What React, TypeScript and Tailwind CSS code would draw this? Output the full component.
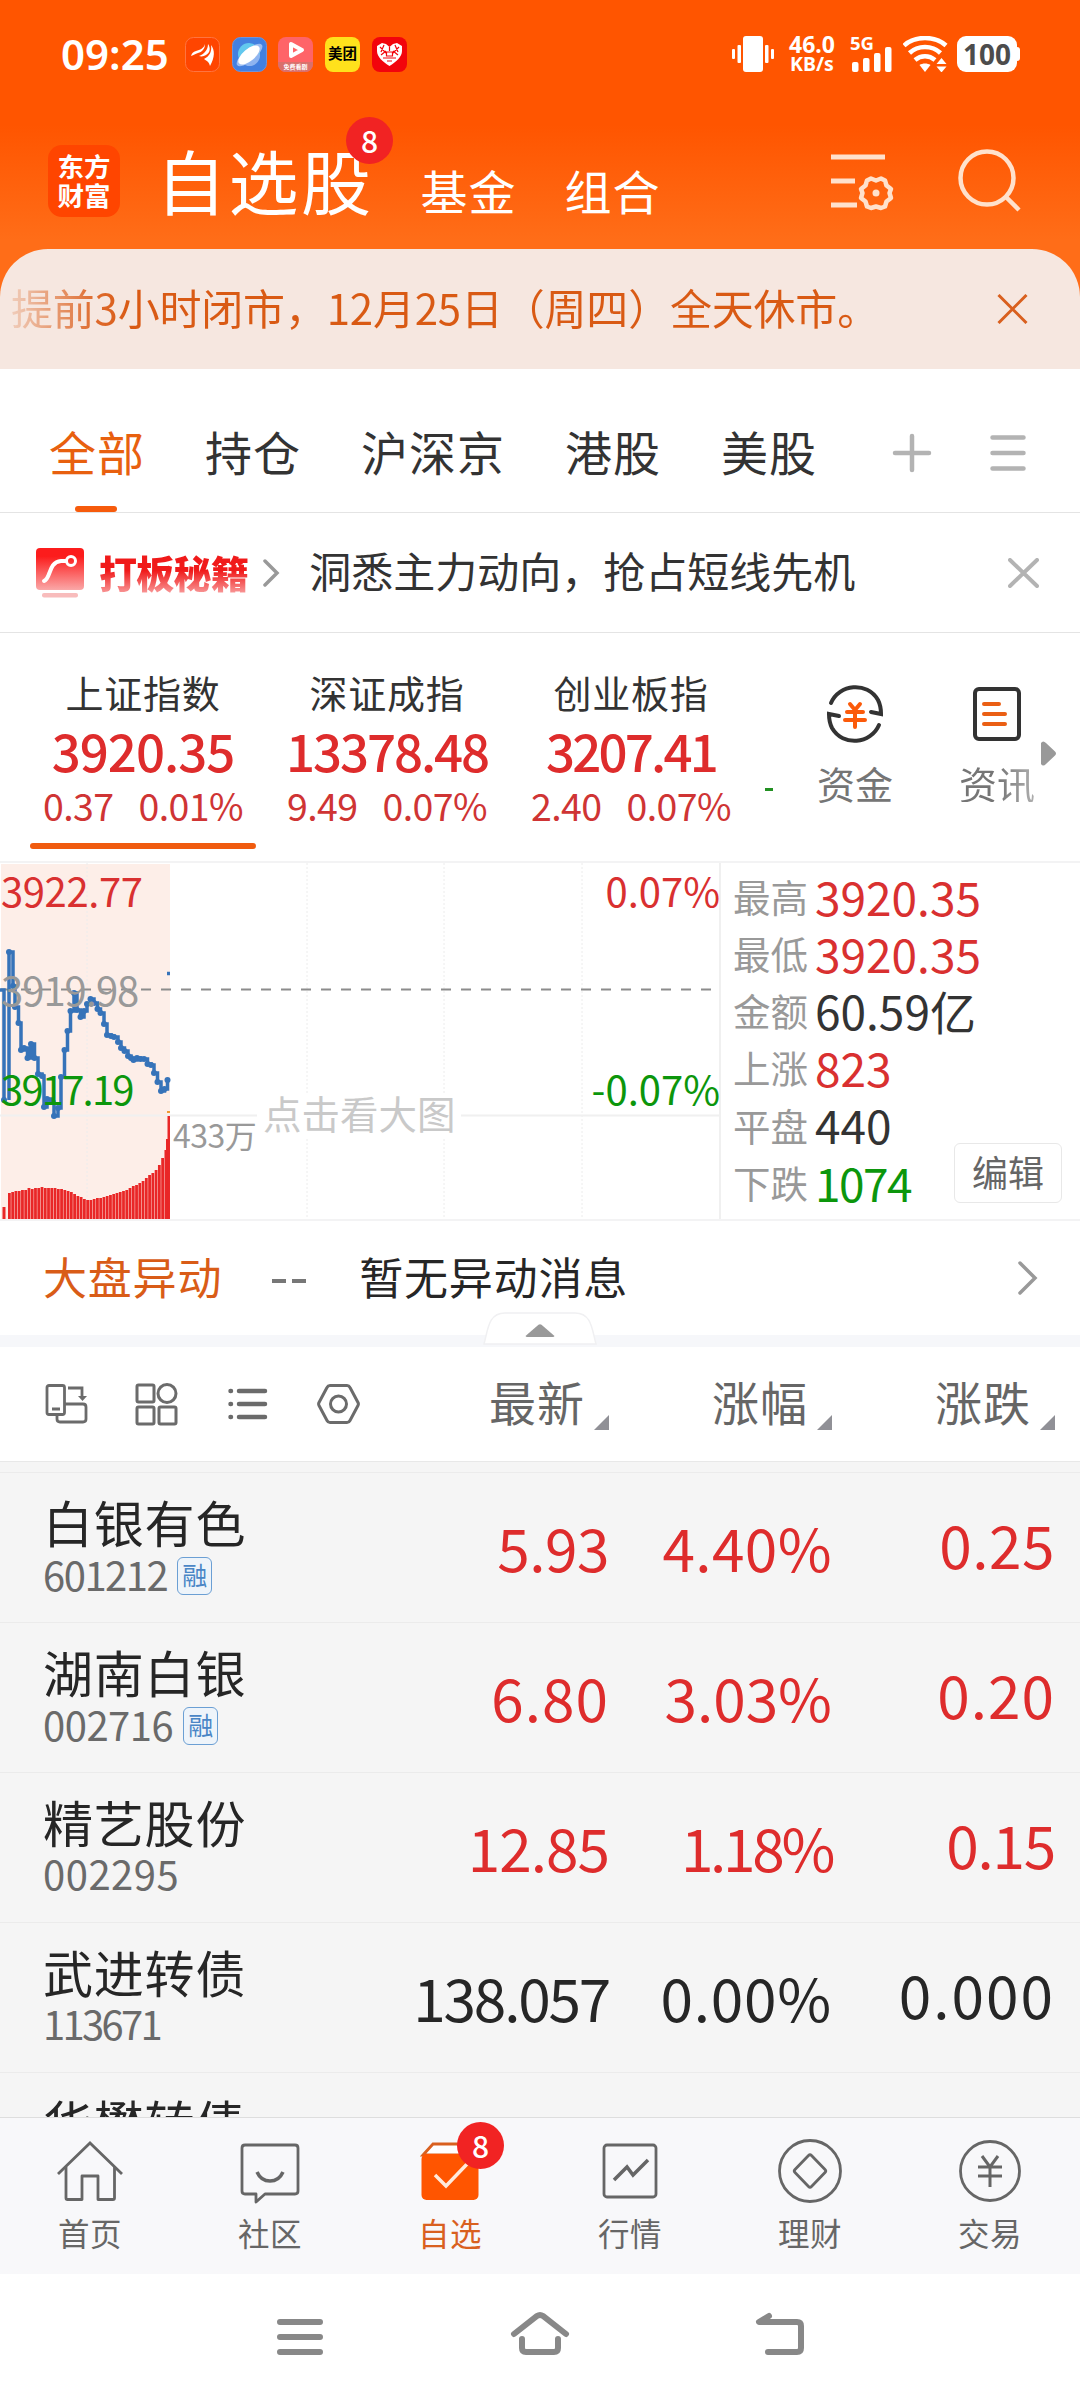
import type { ReactNode } from "react";

const FONT = "font-['Noto_Sans_CJK_SC',sans-serif]";

const TABS = ["全部", "持仓", "沪深京", "港股", "美股"];

const INDICES = [
  { name: "上证指数", value: "3920.35", diff: "0.37", pct: "0.01%", active: true, cls: "tracking-[-1px]" },
  { name: "深证成指", value: "13378.48", diff: "9.49", pct: "0.07%", active: false, cls: "tracking-[-2.1px]" },
  { name: "创业板指", value: "3207.41", diff: "2.40", pct: "0.07%", active: false, cls: "tracking-[-2.8px]" },
];

const STATS = [
  { label: "最高", value: "3920.35", color: "text-[#d93030]" },
  { label: "最低", value: "3920.35", color: "text-[#d93030]" },
  { label: "金额", value: "60.59亿", color: "text-[#333]" },
  { label: "上涨", value: "823", color: "text-[#d93030]" },
  { label: "平盘", value: "440", color: "text-[#333]" },
  { label: "下跌", value: "1074", color: "tracking-[-1.5px] text-[#0c960c]" },
];

const STOCKS = [
  { name: "白银有色", code: "601212", margin: true, price: "5.93", pct: "4.40%", diff: "0.25", up: true, codeCls: "tracking-[-1.5px]", priceCls: "tracking-[-0.5px]", pctCls: "tracking-[0.4px]", diffCls: "tracking-[0.5px]" },
  { name: "湖南白银", code: "002716", margin: true, price: "6.80", pct: "3.03%", diff: "0.20", up: true, codeCls: "tracking-[-0.5px]", priceCls: "tracking-[1px]", pctCls: "tracking-[0px]", diffCls: "tracking-[1px]" },
  { name: "精艺股份", code: "002295", margin: false, price: "12.85", pct: "1.18%", diff: "0.15", up: true, codeCls: "tracking-[0.5px]", priceCls: "tracking-[-1px]", pctCls: "tracking-[-3.3px]", diffCls: "tracking-[-1.2px]" },
  { name: "武进转债", code: "113671", margin: false, price: "138.057", pct: "0.00%", diff: "0.000", up: false, codeCls: "tracking-[-2.7px]", priceCls: "tracking-[-2.2px]", pctCls: "tracking-[0.8px]", diffCls: "tracking-[2px]" },
  { name: "华懋转债", code: "", margin: false, price: "", pct: "", diff: "", up: false, codeCls: "", priceCls: "", pctCls: "", diffCls: "" },
];

// intraday price, [x, y] in chart pixels
const PRICE: [number, number][] = [
  [9, 89], [13, 123], [15, 144], [18.5, 160], [21, 187], [24, 185], [27.5, 195], [31, 181],
  [34.5, 195], [38, 211], [42, 213], [44, 244], [47, 236], [51.5, 239], [54, 253], [58, 245],
  [61, 214], [64.5, 187], [67.5, 168], [70.5, 148], [74, 130], [77, 147], [80.5, 154], [84, 148],
  [87, 141], [90.5, 136], [94, 140], [97.5, 146], [100.5, 150], [104, 161], [107, 172],
  [111, 173], [114, 174], [118, 179], [121, 185], [124.5, 188], [128, 193], [131, 195],
  [133.5, 197], [137, 195], [140.5, 196], [144, 196], [147.5, 201], [151, 202], [154, 210],
  [157.5, 219], [161, 228], [164.5, 226], [167.5, 217],
];

const VOLUME = [
  26, 27, 28, 28, 29, 29, 31, 30, 31, 31, 32, 31, 31, 31, 31, 30, 30, 29, 28, 27, 25, 23, 22,
  20, 19, 19, 20, 21, 21, 22, 23, 24, 25, 26, 27, 28, 29, 31, 33, 34, 36, 38, 41, 44, 46, 49,
  54, 61, 69,
];

const stepPath = PRICE.map(([x, y], i) => (i === 0 ? `M${x} ${y}` : `H${x}V${y}`)).join("");

function StatusBar() {
  return (
    <div className="flex h-[108px] items-center">
      <span className="ml-[61px] w-[124px] font-['Noto_Sans',sans-serif] text-[42px] font-semibold leading-none text-white">
        09:25
      </span>
      <div className="flex gap-[11.7px]">
        <svg width="35" height="35" viewBox="0 0 35 35">
          <rect x=".5" y=".5" width="34" height="34" rx="8" fill="#ff4500" stroke="#ff7440" />
          <path d="M6 19c1-3 2-4 5-5 4-1 8-3 9-7 0 5-3 8-7 9-3 1-4 2-7 3zM14 19c5-2 9-6 9-12 3 4 2 9-2 11-2 1-4 2-7 1zM19 22c6-3 8-8 7-14 4 5 4 12-1 21-1-4-3-5-6-7z" fill="#fff" />
        </svg>
        <svg width="35" height="35" viewBox="0 0 35 35">
          <rect x=".5" y=".5" width="34" height="34" rx="8" fill="#4380e0" stroke="#6d93dc" />
          <circle cx="17" cy="17" r="11" fill="#62c8ee" />
          <path d="M10 26c8 7 18 1 18-8l-3-3z" fill="#8fb4f0" />
          <ellipse cx="17.500" cy="18" rx="16" ry="6" transform="rotate(-40 17.500 18)" fill="#9bbcf0" />
          <ellipse cx="17" cy="18" rx="13" ry="6" transform="rotate(-40 17 18)" fill="#fff" />
        </svg>
        <svg width="35" height="35" viewBox="0 0 35 35">
          <rect width="35" height="35" rx="8" fill="#ff6468" />
          <path d="M0 25h35v2a8 8 0 0 1-8 8H8a8 8 0 0 1-8-8z" fill="#d9706c" />
          <path d="M13 7v12l11-6z" fill="none" stroke="#fff" strokeWidth="4" strokeLinejoin="round" />
          <text x="17.5" y="32" textAnchor="middle" fontSize="6" fontWeight="700" fill="#fff">免费看剧</text>
        </svg>
        <div className="flex size-[35px] items-center justify-center rounded-lg bg-[#ffe11c] pb-px text-[14.5px] font-bold leading-none text-black">
          美团
        </div>
        <svg width="35" height="35" viewBox="0 0 35 35">
          <rect width="35" height="35" rx="8" fill="#f2040c" />
          <path d="M17.500 29C11 25 5 20 5 14V9l5-3 4 1 3.500 3L21 7l4-1 5 3v5c0 6-6 11-12.500 15z" fill="#fff" />
          <path d="M8 10l6 6m-5 2l5-4m13-4l-6 6m5 2l-5-4M12 8l-3 7m14-7l3 7M11 21h13m-9 3h5M17.500 10v4m-3 1h6v4h-6z" fill="none" stroke="#f2040c" strokeWidth="1.200" />
        </svg>
      </div>
      <svg className="ml-auto" width="42" height="36" viewBox="0 0 42 36" fill="#fff">
        <rect x="11" width="20" height="36" rx="3" />
        <rect y="13" width="3" height="10" rx="1" />
        <rect x="5.500" y="9" width="3.500" height="18" rx="1" />
        <rect x="33" y="9" width="3.500" height="18" rx="1" />
        <rect x="39" y="13" width="3" height="10" rx="1" />
      </svg>
      <div className="ml-[13px] flex w-[50px] flex-col items-center font-['Noto_Sans',sans-serif] font-bold leading-[20px] text-white">
        <span className="text-[23px]">46.0</span>
        <span className="text-[19.5px]">KB/s</span>
      </div>
      <div className="ml-[13px] flex w-[44px] flex-col">
        <span className="h-[13px] font-['Noto_Sans',sans-serif] text-[18.500px] font-bold leading-[13px] text-white">5G</span>
        <svg className="-mt-0.5 ml-0.5" width="41" height="25" viewBox="0 0 41 25" fill="#fff">
          <rect y="15" width="6.500" height="10" rx="2" />
          <rect x="11" y="11" width="6.500" height="14" rx="2" />
          <rect x="22" y="6" width="6.500" height="19" rx="2" />
          <rect x="33" width="6.500" height="25" rx="2" />
        </svg>
      </div>
      <svg className="ml-[9px]" width="45" height="36" viewBox="0 0 45 36" fill="none" stroke="#fff" strokeWidth="4.500">
        <path d="M1 9.500C12-.5 32-.5 43 9.500M6.500 17C15 9 29 9 37.500 17M12 24c6-5 14-5 20 0" />
        <path d="M16.500 29c3-2 8-2 11 0L22 36z" fill="#fff" stroke="none" />
        <path d="M33.500 28l5-6 5 6zM33.500 30.500l5 6 5-6z" fill="#fff" stroke="none" />
      </svg>
      <div className="ml-[9px] flex h-9 w-[60px] items-center justify-center rounded-[9px] bg-white font-['Noto_Sans',sans-serif] text-[28px] font-bold leading-none text-[#4c4c4c]">
        100
      </div>
      <div className="mr-[60px] h-[14px] w-[3px] rounded-r-sm bg-white" />
    </div>
  );
}

function Header() {
  return (
    <header className="flex h-[369px] flex-col bg-[linear-gradient(180deg,#ff5500_0px,#ff5500_125px,#ff6d18_240px,#ff6d18_369px)]">
      <StatusBar />
      <div className="flex h-[141px] items-start text-white">
        <div className="ml-12 mt-[37px] flex size-[72px] flex-col items-center justify-center rounded-[14px] bg-[#ff4500] pb-0.5 text-[26.5px] font-bold leading-[29px]">
          <span>东方</span>
          <span>财富</span>
        </div>
        <div className="relative ml-[36px] mt-[37px] text-[70px] leading-none tracking-[2.5px]">
          自选股
          <span className="absolute -top-7 left-[190px] flex size-[47px] items-center justify-center rounded-full bg-[#f12323] pb-0.5 text-[30px] font-medium tracking-normal">
            8
          </span>
        </div>
        <span className="ml-[47px] mt-[58px] text-[47px] leading-none tracking-[1px]">基金</span>
        <span className="ml-12 mt-[58px] text-[47px] leading-none tracking-[1px]">组合</span>
        <svg className="ml-auto mt-[45px]" width="64" height="58" viewBox="0 0 64 58" fill="none" stroke="#ffe1cc" strokeWidth="5">
          <path d="M0 4h54M0 28h24M0 52h26" />
          <path
            d="M40 25.500l5 2 5-2 4 2 1.500 5 4.500 3.500-1.500 4 1.500 5-4.500 3.500-1.500 5-4 1.500-5-1.500-5 1.500-4-1.500-1.500-5L30 45l1.500-5-1.500-4 4.500-3.500 1.500-5z"
            strokeWidth="4.500"
            strokeLinejoin="round"
          />
          <circle cx="45" cy="40" r="3.500" fill="#ffe1cc" stroke="none" />
        </svg>
        <svg className="ml-[62px] mr-[57px] mt-10" width="66" height="66" viewBox="0 0 66 66" fill="none" stroke="#ffe1cc" strokeWidth="4.500">
          <circle cx="30" cy="30" r="26.500" />
          <path d="M48 48l14 14" />
        </svg>
      </div>
      <div className="flex h-[120px] items-center rounded-t-[48px] bg-[#f6e7e0] pl-[11px]">
        <span className="whitespace-nowrap bg-[linear-gradient(90deg,#f0cdbb_0px,#de6a2c_85px,#d95a14_120px)] bg-clip-text pb-1 text-[42px] leading-[50px] tracking-[-0.2px] text-transparent">
          提前3小时闭市，12月25日（周四）全天休市。
        </span>
        <svg className="ml-auto mr-[52px]" width="31" height="30" viewBox="0 0 31 30" fill="none" stroke="#d9601f" strokeWidth="3">
          <path d="M1.500 1l28 28M29.500 1l-28 28" />
        </svg>
      </div>
    </header>
  );
}

function TabBar() {
  return (
    <nav className="flex h-[144px] items-start border-b border-[#e4e4e4] bg-white pl-[49px]">
      <div className="flex gap-[60px] pt-[58px] text-[47px] leading-none tracking-[1px] text-[#333]">
        {TABS.map((tab, i) => (
          <div key={tab} className={i === 0 ? "flex h-[85px] flex-col justify-between text-[#e8600f]" : "h-[85px]"}>
            <span>{tab}</span>
            {i === 0 && <span className="ml-[26px] h-1.5 w-[42px] rounded-full bg-[#f65b0c]" />}
          </div>
        ))}
      </div>
      <svg className="ml-auto mt-16" width="40" height="40" viewBox="0 0 40 40" stroke="#b3b3b3" strokeWidth="4.500" strokeLinecap="round">
        <path d="M3 20h34M20 3v34" />
      </svg>
      <svg className="ml-[57px] mr-[53px] mt-16" width="38" height="40" viewBox="0 0 38 40" stroke="#b3b3b3" strokeWidth="4.500" strokeLinecap="round">
        <path d="M3.500 4.500h31M3.500 20h31M3.500 35.500h31" />
      </svg>
    </nav>
  );
}

function Promo() {
  return (
    <div className="flex h-[120px] items-center border-b border-[#e4e4e4] bg-white pl-9">
      <svg width="48" height="50" viewBox="0 0 48 50" fill="none">
        <defs>
          <linearGradient id="promo" x1="0" y1="0" x2="0" y2="1">
            <stop offset=".2" stopColor="#fc1c1c" />
            <stop offset="1" stopColor="#faa8a8" />
          </linearGradient>
        </defs>
        <rect width="48" height="42" rx="4" fill="url(#promo)" />
        <path d="M8 33c7-2 4-19 17-20h5" stroke="#fff" strokeWidth="4" strokeLinecap="round" />
        <circle cx="35" cy="13" r="4.500" stroke="#fff" strokeWidth="3" />
        <rect x="6" y="45" width="36" height="4.500" rx="2" fill="#f8bcbc" />
      </svg>
      <span className="ml-[15px] bg-[linear-gradient(180deg,#f01a1a_45%,#f9a0a0_95%)] bg-clip-text pb-0.5 text-[38px] font-black leading-[46px] tracking-[-0.7px] text-transparent">
        打板秘籍
      </span>
      <svg className="ml-[14px]" width="18" height="28" viewBox="0 0 18 28" fill="none" stroke="#999" strokeWidth="3.500" strokeLinecap="round">
        <path d="M3 2l12 12L3 26" />
      </svg>
      <span className="ml-[29px] pb-1.5 text-[42px] leading-none text-[#333]">洞悉主力动向，抢占短线先机</span>
      <svg className="ml-auto mr-[41px]" width="31" height="30" viewBox="0 0 31 30" fill="none" stroke="#b3b3b3" strokeWidth="4" strokeLinecap="round">
        <path d="M2 2l27 26M29 2L2 28" />
      </svg>
    </div>
  );
}

function IndexStrip() {
  return (
    <section className="flex h-[228px] items-start bg-white pl-[21px] pt-10">
      {INDICES.map((item) => (
        <div key={item.name} className="flex w-[244px] flex-none flex-col items-center">
          <span className="text-[38px] leading-none tracking-[0.8px] text-[#333]">{item.name}</span>
          <span className={`mt-3.5 text-[51px] font-medium leading-none text-[#de2c2c] ${item.cls}`}>{item.value}</span>
          <span className="mt-2.5 flex gap-[25px] text-[37.500px] leading-none tracking-[-0.6px] text-[#cf3434]">
            <span>{item.diff}</span>
            <span>{item.pct}</span>
          </span>
          {item.active && <span className="mt-[19px] h-1.5 w-[226px] rounded-full bg-[#f05b0f]" />}
        </div>
      ))}
      <span className="ml-3 mt-[115px] h-[3px] w-2 bg-[#229022]" />
      <div className="ml-[44px] flex flex-col items-center pt-[11px]">
        <svg width="60" height="60" viewBox="0 0 60 60" fill="none" stroke="#333" strokeWidth="4" strokeLinecap="round">
          <path d="M6 19C14 0 42-3 53 16c2 4 3 9 3 14l-10-2" />
          <path d="M54 41C46 60 18 63 7 44c-2-4-3-9-3-14l10 2" />
          <path d="M25 20l5 6 5-6M22 28h16M20 36h20M30 26v17" stroke="#fb5a0a" />
        </svg>
        <span className="mt-5 text-[38px] leading-none text-[#757575]">资金</span>
      </div>
      <div className="ml-[66px] flex flex-col items-center pt-[11px]">
        <svg width="60" height="60" viewBox="0 0 60 60" fill="none" stroke="#333" strokeWidth="4">
          <rect x="8" y="5" width="44" height="50" rx="4" />
          <path d="M17 20h15M17 30h21M17 40h21" stroke="#ea5f14" strokeLinecap="round" />
        </svg>
        <span className="mt-5 bg-[linear-gradient(90deg,#757575_50%,#b0b0b0)] bg-clip-text text-[38px] leading-none text-transparent">
          资讯
        </span>
      </div>
      <svg className="ml-1.5 mt-[68px]" width="15" height="25" viewBox="0 0 15 25" fill="#999">
        <path d="M0 2Q2-1 5 2L14 10.500Q16 12.500 14 14.500L5 23Q2 26 0 23z" />
      </svg>
    </section>
  );
}

function MiniChart() {
  return (
    <svg className="flex-none" width="721" height="356" viewBox="0 0 721 356" fill="none">
      <rect x="1" y="1" width="169" height="355" fill="#fdeee8" />
      <path d="M87 0V356M307 0V356M444 0V356M582 0V356" stroke="#ececec" strokeDasharray="2 2" />
      <path d="M0 252.500H720M720 0V356" stroke="#f0f0f0" strokeWidth="2" />
      <path d="M1 126.500H711" stroke="#8c8c8c" strokeWidth="2" strokeDasharray="10 10" />
      <g stroke="#3673b9" strokeWidth="3.500">
        <path d="M0 127H4V237M9 237V89" />
        <path d={stepPath} />
        <path d="M167 110.500h3" />
      </g>
      <g fill="#3673b9">
        <circle cx="4" cy="237" r="3" />
        {PRICE.map(([x, y]) => (
          <circle key={x} cx={x} cy={y} r="3" />
        ))}
      </g>
      <g fill="#e92727">
        <rect x="2.500" y="344" width="3" height="12" />
        {VOLUME.map((h, i) => (
          <rect key={i} x={8 + i * 3.26} y={356 - h} width="2.800" height={h} />
        ))}
        <rect x="166" y="276" width="2" height="80" />
        <rect x="167.500" y="253" width="2.500" height="103" />
      </g>
      <rect x="167" y="248" width="3" height="2" fill="#f09a30" />
      <rect x="257" y="232" width="204" height="44" fill="#fff" />
      <g fontSize="40">
        <text x="1" y="44" fill="#d93030" letterSpacing="-.4">3922.77</text>
        <text x="1" y="143" fill="#999" letterSpacing="-1">3919.98</text>
        <text x="1" y="242" fill="#0c960c" letterSpacing="-1.800">3917.19</text>
        <text x="720" y="44" fill="#d93030" textAnchor="end">0.07%</text>
        <text x="720" y="242" fill="#0c960c" textAnchor="end">-0.07%</text>
      </g>
      <text x="173" y="285" fontSize="32" fill="#999" letterSpacing="-.5">433万</text>
      <text x="263" y="266" fontSize="38.500" fill="#c9c9c9">点击看大图</text>
    </svg>
  );
}

function MarketPanel() {
  return (
    <section className="flex h-[360px] border-y-2 border-[#f3f3f4] bg-white">
      <MiniChart />
      <div className="flex flex-1 items-end justify-between pl-3">
        <div className="flex h-[356px] flex-none flex-col pt-1">
          {STATS.map((s) => (
            <div key={s.label} className="flex h-[57.2px] items-center leading-none">
              <span className="w-[82px] text-[37.5px] text-[#999]">{s.label}</span>
              <span className={`text-[46px] ${s.color}`}>{s.value}</span>
            </div>
          ))}
        </div>
        <div className="-ml-12 mb-4 mr-[18px] flex h-[60px] w-[108px] flex-none items-center justify-center rounded-md border border-[#e8e8e8] pb-1 text-[36px] leading-none text-[#666]">
          编辑
        </div>
      </div>
    </section>
  );
}

function AlertRow() {
  return (
    <div className="relative flex h-[126px] items-center border-b-[12px] border-[#f6f7fa] bg-white pl-[43px] text-[44px] leading-none tracking-[0.8px]">
      <span className="pb-1 text-[#d95c17]">大盘异动</span>
      <span className="ml-[50px] flex w-[36px] gap-[6px]">
        <span className="mt-1.5 h-1 w-[14px] bg-[#777]" />
        <span className="mt-1.5 h-1 w-[14px] bg-[#777]" />
      </span>
      <span className="ml-[51px] pb-1 text-[#262626]">暂无异动消息</span>
      <svg className="ml-auto mr-[42px]" width="20" height="34" viewBox="0 0 20 34" fill="none" stroke="#999" strokeWidth="3.500" strokeLinecap="round">
        <path d="M2 2l15 15L2 32" />
      </svg>
      <svg className="absolute -bottom-[10px] left-[483px]" width="114" height="33" viewBox="0 0 114 33">
        <path d="M1 32C5 18 5 1 22 1H92C109 1 109 18 113 32z" fill="#fff" stroke="#f0f0f2" strokeWidth="1.500" />
        <path d="M42.500 24L55.500 12.800Q57 11.600 58.500 12.800L71.500 24Q71 25 70 25H44Q43 25 42.500 24z" fill="#999" />
      </svg>
    </div>
  );
}

function SortHead({ children }: { children: ReactNode }) {
  return (
    <div className="flex w-[223px] items-end justify-end text-[47px] leading-none tracking-[1px] text-[#666]">
      <span className="relative -top-1">{children}</span>
      <svg className="mb-[-2px] ml-[9px]" width="15" height="15" viewBox="0 0 15 15" fill="#909096">
        <path d="M15 0V15H0z" />
      </svg>
    </div>
  );
}

function ListToolbar() {
  return (
    <div className="flex h-[115px] items-center border-b border-[#e8e8e8] bg-white pl-[45px]">
      <svg width="43" height="42" viewBox="0 0 43 42" fill="none" stroke="#6b6b6b" strokeWidth="2.800">
        <rect x="2" y="2.500" width="17.500" height="29" rx="2" />
        <path d="M7 26h8M23 5h14v10M20 21h18q3 0 3 3v12q0 3-3 3H15q-3 0-3-3v-4" />
        <path d="M33 13h9l-4.500 5z" fill="#6b6b6b" stroke="none" />
      </svg>
      <svg className="ml-[46px]" width="44" height="44" viewBox="0 0 44 44" fill="none" stroke="#6b6b6b" strokeWidth="3">
        <rect x="3" y="3" width="17" height="17" rx="1.500" />
        <circle cx="33" cy="11.500" r="9" />
        <rect x="3" y="25" width="17" height="17" rx="1.500" />
        <rect x="25" y="25" width="17" height="17" rx="1.500" />
      </svg>
      <svg className="ml-[48px]" width="42" height="42" viewBox="0 0 42 42" stroke="#6b6b6b" strokeWidth="4.500" strokeLinecap="round">
        <path d="M4.500 8h.5M4.500 21h.5M4.500 34h.5M13 8h26M13 21h26M13 34h26" />
      </svg>
      <svg className="ml-[49px]" width="43" height="42" viewBox="0 0 43 42" fill="none" stroke="#6b6b6b" strokeWidth="3">
        <path d="M13 2.500h17q2 0 3 2l8 15q.8 1.500 0 3l-8 15q-1 2-3 2H13q-2 0-3-2l-8-15q-.8-1.500 0-3l8-15q1-2 3-2z" />
        <circle cx="21.500" cy="21" r="8" />
      </svg>
      <div className="ml-auto flex pr-[25px]">
        <SortHead>最新</SortHead>
        <SortHead>涨幅</SortHead>
        <SortHead>涨跌</SortHead>
      </div>
    </div>
  );
}

function StockList() {
  return (
    <main className="h-[655px] overflow-hidden bg-[#f5f5f5] pt-[10px]">
      {STOCKS.map((s) => (
        <div key={s.name} className="flex h-[150px] border-t border-[#ebebeb] pl-[43px]">
          <div className="flex w-[300px] flex-none flex-col pt-[23px] leading-none">
            <span className="text-[50px] tracking-[0.8px] text-[#262626]">{s.name}</span>
            <div className="mt-[7px] flex items-center gap-[10px]">
              <span className={`text-[40px] text-[#6a6a6a] ${s.codeCls}`}>{s.code}</span>
              {s.margin && (
                <span className="mt-1 flex h-[38px] w-[35px] items-center justify-center rounded-md border-[1.500px] border-[#6b9fd4] bg-[#eef4fa] pb-1 text-[25px] text-[#4a86c6]">
                  融
                </span>
              )}
            </div>
          </div>
          <div className={`flex flex-1 pr-[25px] text-right text-[58.500px] leading-none ${s.up ? "text-[#de2c2c]" : "text-[#262626]"}`}>
            <span className={`w-[266px] pt-[45px] ${s.priceCls}`}>{s.price}</span>
            <span className={`w-[223px] pt-[45px] ${s.pctCls}`}>{s.pct}</span>
            <span className={`w-[223px] pt-[42px] ${s.diffCls}`}>{s.diff}</span>
          </div>
        </div>
      ))}
    </main>
  );
}

function NavItem({ label, active, children }: { label: string; active?: boolean; children: ReactNode }) {
  return (
    <div className={`relative flex w-[180px] flex-col items-center pt-[19px] ${active ? "text-[#d9601f]" : "text-[#666]"}`}>
      <svg width="68" height="68" viewBox="0 0 68 68" fill="none" stroke="currentColor" strokeWidth="2.800">
        {children}
      </svg>
      <span className="mt-3 text-[31.500px] leading-none tracking-[0.5px]">{label}</span>
      {active && (
        <span className="absolute left-[97px] top-1 flex size-[47px] items-center justify-center rounded-full bg-[#f12323] pb-0.5 text-[30px] font-medium leading-none text-white">
          8
        </span>
      )}
    </div>
  );
}

function BottomNav() {
  return (
    <nav className="flex h-[157px] border-t border-[#dedede] bg-[#f8f8fa]">
      <NavItem label="首页">
        <path d="M2 37L34 6l32 31" />
        <path d="M10 30v31q0 1.500 1.500 1.500H26V39h16v23.500h15q1.500 0 1.500-1.500V30" strokeLinejoin="round" />
      </NavItem>
      <NavItem label="社区">
        <path d="M9 8h50q3 0 3 3v43q0 3-3 3H29l-9 8v-8H9q-3 0-3-3V11q0-3 3-3z" strokeLinejoin="round" />
        <path d="M21 35q4 9 13 9t13-9" strokeWidth="3.500" />
      </NavItem>
      <NavItem label="自选" active>
        <path d="M7 18L17 7h38l6 11z" fill="#fff" />
        <rect x="5.500" y="17" width="57" height="46" rx="5" fill="#ff5500" stroke="none" />
        <path d="M19 38l11 11 23-24" stroke="#ffeadb" strokeWidth="3.500" />
      </NavItem>
      <NavItem label="行情">
        <rect x="8" y="8" width="52" height="52" rx="3" />
        <path d="M18 43l13-13 6 8 15-15" strokeWidth="3.500" />
      </NavItem>
      <NavItem label="理财">
        <circle cx="34" cy="34" r="30.500" />
        <path d="M32.500 18.500L19 32.500q-1.500 1.500 0 3l13.500 14q1.500 1.500 3 0l13.500-14q1.500-1.500 0-3L35.500 18.500q-1.500-1.500-3 0z" />
      </NavItem>
      <NavItem label="交易">
        <circle cx="34" cy="34" r="29.500" />
        <path d="M26 19l8 11 8-11M22 30h24M22 39h24M34 30v20" strokeWidth="3" />
      </NavItem>
    </nav>
  );
}

function SystemNav() {
  return (
    <div className="flex h-[126px] items-start justify-center gap-[180px] bg-white pt-[33px]">
      <svg width="60" height="54" viewBox="0 0 60 54" fill="none" stroke="#888" strokeWidth="6" strokeLinecap="round">
        <path d="M10 15h40M10 30h40M10 45h40" />
      </svg>
      <svg width="60" height="54" viewBox="0 0 60 54" fill="none" stroke="#888" strokeWidth="6" strokeLinecap="round">
        <path d="M4 27L27 9q3-2 6 0l23 18M12 32v9q0 4 4 4h28q4 0 4-4v-9" />
      </svg>
      <svg width="60" height="54" viewBox="0 0 60 54" fill="none" stroke="#888" strokeWidth="6" strokeLinecap="round" strokeLinejoin="round">
        <path d="M19 9L9 15h38q4 0 4 4v22q0 4-4 4H18" />
      </svg>
    </div>
  );
}

export default function App() {
  return (
    <div className={`h-[2400px] w-[1080px] overflow-hidden bg-white ${FONT}`}>
      <Header />
      <TabBar />
      <Promo />
      <IndexStrip />
      <MarketPanel />
      <AlertRow />
      <ListToolbar />
      <StockList />
      <BottomNav />
      <SystemNav />
    </div>
  );
}
